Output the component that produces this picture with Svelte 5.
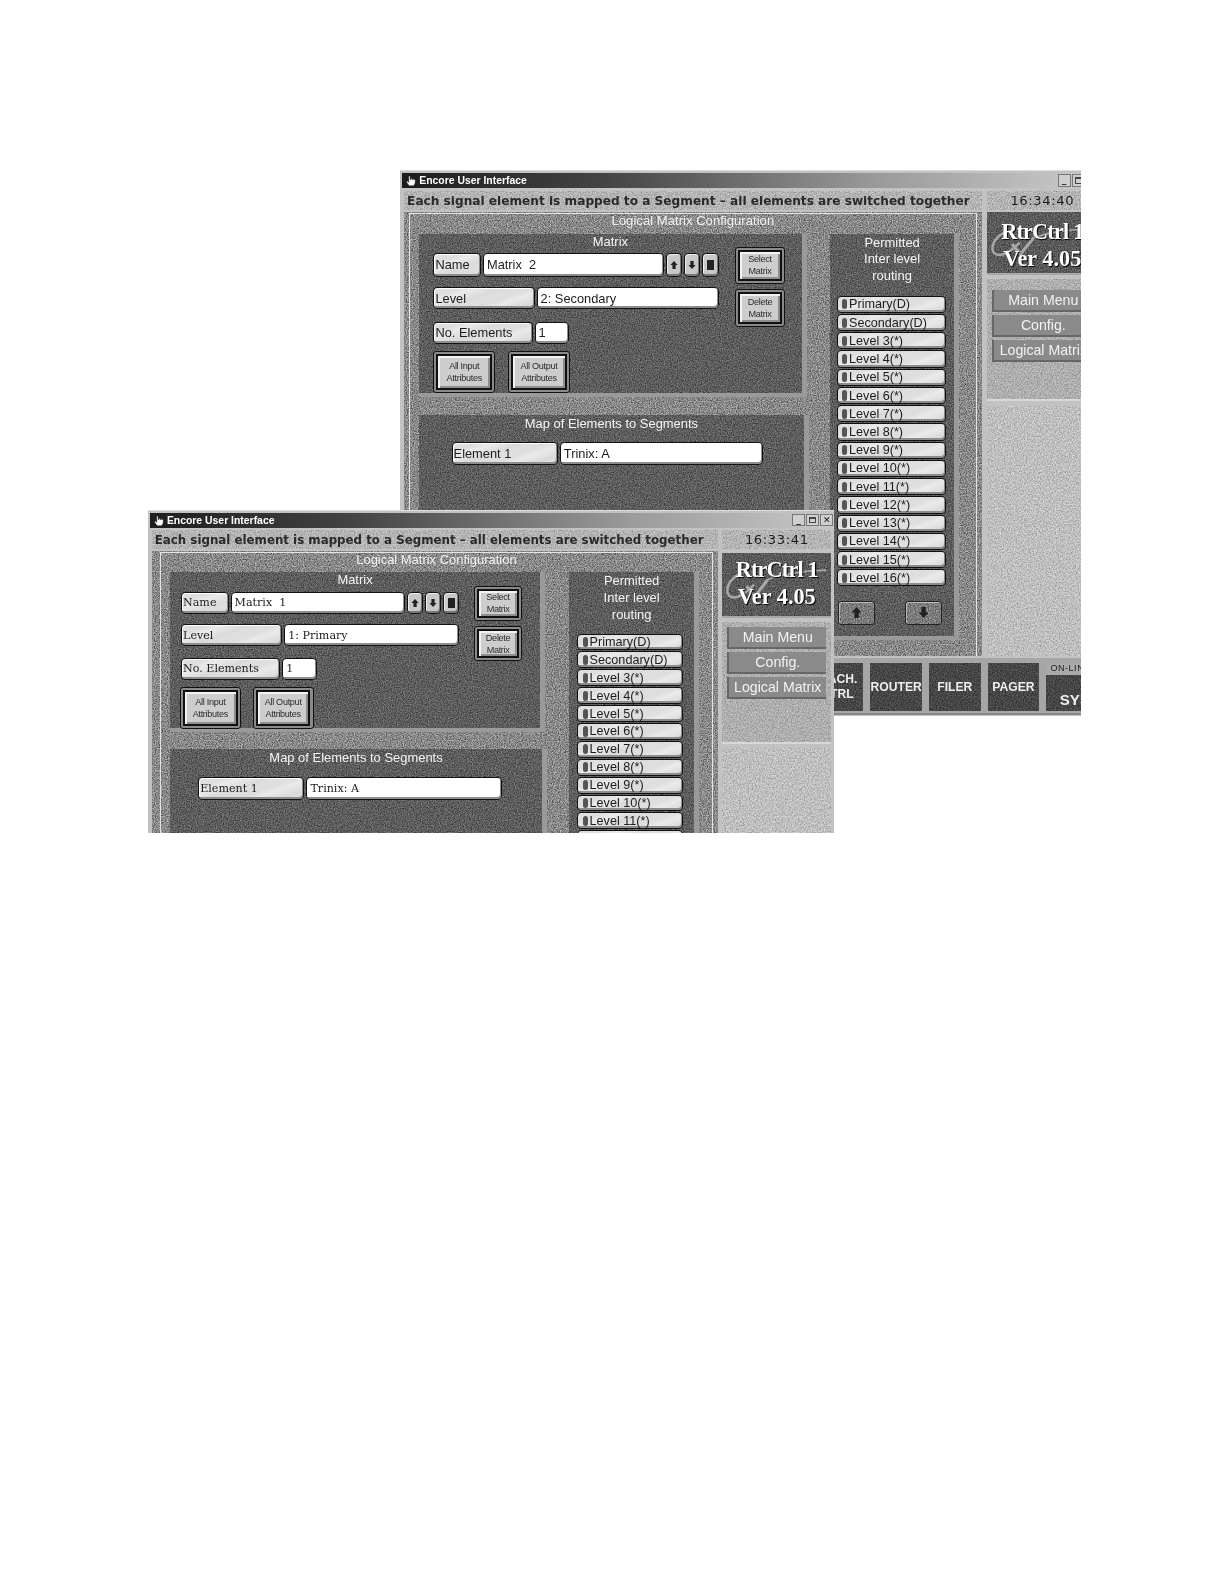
<script>
  const levels = ['Primary(D)', 'Secondary(D)']
  for (let i = 3; i <= 16; i++) levels.push(`Level ${i}(*)`)

  const windows = [
    { cls: 'back', time: '16:34:40', matrix: 'Matrix  2', level: '2: Secondary', footer: true },
    { cls: 'front', time: '16:33:41', matrix: 'Matrix  1', level: '1: Primary', footer: false }
  ]
</script>

{#snippet hand()}
  <svg class="hand" viewBox="0 0 12 12">
    <path d="M4 1h1.500v4h.7V3.500h1.300V5h.7V4h1.200v1.200h.6v-.5h1v3.800L9.500 11.500H4.500L1.500 7.500l1-1L4 8z" fill="#fff" stroke="#000" stroke-width=".4" />
  </svg>
{/snippet}

{#snippet arrow(up)}
  <svg class="arrow" viewBox="0 0 10 12">
    <path d={up ? 'M5 1 9.500 6H7v5H3V6H.5z' : 'M5 11 9.500 6H7V1H3v5H.5z'} fill="#222" />
  </svg>
{/snippet}

{#snippet dbl(a, b, kind)}
  <div class="dbl {kind}">
    <div class="face"><span>{a}</span><span>{b}</span></div>
  </div>
{/snippet}

{#snippet encore(w)}
  <div class="win {w.cls}">
    <div class="title">
      {@render hand()}
      <span>Encore User Interface</span>
      <div class="ctrls">
        <i class="c">_</i><i class="c"><b class="max"></b></i><i class="c">✕</i>
      </div>
    </div>
    <div class="head">
      <div class="msg">Each signal element is mapped to a Segment – all elements are switched together</div>
      <div class="clock">{w.time}</div>
    </div>
    <div class="cols">
      <div class="main">
        <div class="frame">
          <div class="frame-title">Logical Matrix Configuration</div>
          <div class="frame-row">
            <div class="left">
              <section class="panel matrix">
                <h3>Matrix</h3>
                <div class="matrix-row">
                  <div class="form">
                    <div class="row r-name">
                      <div class="lab l-name">Name</div>
                      <div class="inp grow">{w.matrix}</div>
                      <div class="tiny">{@render arrow(true)}</div>
                      <div class="tiny">{@render arrow(false)}</div>
                      <div class="tiny"><b class="stop"></b></div>
                    </div>
                    <div class="row r-level">
                      <div class="lab l-level">Level</div>
                      <div class="inp grow">{w.level}</div>
                    </div>
                    <div class="row r-no">
                      <div class="lab l-no">No. Elements</div>
                      <div class="inp i-no">1</div>
                    </div>
                    <div class="row r-attr">
                      {@render dbl('All Input', 'Attributes', 'attr')}
                      {@render dbl('All Output', 'Attributes', 'attr')}
                    </div>
                  </div>
                  <div class="acts">
                    {@render dbl('Select', 'Matrix', 'act')}
                    {@render dbl('Delete', 'Matrix', 'act')}
                  </div>
                </div>
              </section>
              <section class="panel map">
                <h3>Map of Elements to Segments</h3>
                <div class="row r-el">
                  <div class="lab l-el">Element 1</div>
                  <div class="inp grow">Trinix: A</div>
                </div>
              </section>
            </div>
            <section class="panel permit">
              <h3>Permitted<br />Inter level<br />routing</h3>
              <div class="levels">
                {#each levels as l}
                  <div class="lvl"><b class="pip"></b>{l}</div>
                {/each}
              </div>
              <div class="pager">
                <div class="pg">{@render arrow(true)}</div>
                <div class="pg">{@render arrow(false)}</div>
              </div>
            </section>
          </div>
        </div>
      </div>
      <div class="side">
        <div class="logo">
          <svg class="swoosh" viewBox="0 0 320 175" preserveAspectRatio="none">
            <path d="M62 55C28 64 6 98 20 118c18 18 52-8 74-30" fill="none" stroke="#a8a8a8" stroke-width="7" />
            <path d="M72 92l24 30 38-48" fill="none" stroke="#a8a8a8" stroke-width="9" />
            <path d="M134 74c50-18 110-24 172-26" fill="none" stroke="#a8a8a8" stroke-width="5" />
          </svg>
          <div class="logo-text rtr">RtrCtrl 1</div>
          <div class="logo-text">Ver 4.05</div>
        </div>
        <div class="menu">
          <div class="mbtn">Main Menu</div>
          <div class="mbtn">Config.</div>
          <div class="mbtn">Logical Matrix</div>
        </div>
        <div class="blank"></div>
      </div>
    </div>
    {#if w.footer}
      <div class="foot">
        <div class="fbtn">MACH.<br />CTRL</div>
        <div class="fbtn">ROUTER</div>
        <div class="fbtn">FILER</div>
        <div class="fbtn">PAGER</div>
        <div class="fbtn sys"><small>ON-LINE</small><span>SYSTEM</span></div>
      </div>
    {/if}
  </div>
{/snippet}

<div class="page">
  {#each windows as w}
    {@render encore(w)}
  {/each}
</div>

<style>
  :global(body) {
    background: #fff;
  }
  .page {
    --noise: url("data:image/svg+xml,%3Csvg xmlns='http://www.w3.org/2000/svg' width='240' height='240'%3E%3Cfilter id='n'%3E%3CfeTurbulence type='fractalNoise' baseFrequency='.85' numOctaves='2' seed='4'/%3E%3CfeColorMatrix values='0 0 0 0 0 0 0 0 0 0 0 0 0 0 0 1.1 0 0 0 -.3'/%3E%3C/filter%3E%3Crect width='240' height='240' filter='url(%23n)'/%3E%3C/svg%3E");
    --soft: url("data:image/svg+xml,%3Csvg xmlns='http://www.w3.org/2000/svg' width='240' height='240'%3E%3Cfilter id='n'%3E%3CfeTurbulence type='fractalNoise' baseFrequency='.7' numOctaves='2' seed='9'/%3E%3CfeColorMatrix values='0 0 0 0 0 0 0 0 0 0 0 0 0 0 0 .6 0 0 0 -.2'/%3E%3C/filter%3E%3Crect width='240' height='240' filter='url(%23n)'/%3E%3C/svg%3E");
    --wave: repeating-linear-gradient(160deg, #dedede 0 9px, #eaeaea 14px, #d8d8d8 24px);
    position: relative;
    width: 1224px;
    height: 1584px;
    overflow: hidden;
    font-family: "Liberation Sans", Arial, sans-serif;
    color: #1c1c1c;
  }

  /* the two screenshots sit freely on the page */
  .win {
    position: absolute;
    box-sizing: border-box;
    overflow: hidden;
    background: #c2c2c2;
    border-top: 1px solid #ddd;
    padding: 2px 0 0 2px;
    filter: blur(.3px);
    zoom: 1.0115;
  }
  .back {
    --main-w: 571px;
    --side-w: 110px;
    --col-gap: 5px;
    --main-h: 439px;
    --frame-l: 5px;
    --left-w: 383px;
    --left-gap: 23px;
    --matrix-h: 162px;
    --map-h: 230px;
    --permit-w: 128px;
    --permit-h: 402px;
    --pad-x: 14px;
    --name-w: 282px;
    --act-gap: 16px;
    --attr-gap: 13px;
    --lvl-w: 108px;
    --lvl-pad: 7px;
    --lvl-h: 17px;
    --lvl-gap: 1.05px;
    --list-top: 11px;
    --head-top: 3px;
    --menu-top: 11px;
    --logo-h: 62px;
    --logo-pad: 7px;
    --side-top: 0;
    left: 395.500px;
    top: 168px;
    width: 673px;
    height: 540px;
  }
  .front {
    --main-w: 560px;
    --side-w: 108px;
    --col-gap: 4px;
    --main-h: 300px;
    --frame-l: 8px;
    --left-w: 371px;
    --left-gap: 24px;
    --matrix-h: 158px;
    --map-h: 230px;
    --permit-w: 128px;
    --permit-h: 402px;
    --pad-x: 11px;
    --name-w: 275px;
    --act-gap: 15px;
    --attr-gap: 12px;
    --lvl-w: 104px;
    --lvl-pad: 8px;
    --lvl-h: 16.700px;
    --lvl-gap: 1px;
    --list-top: 10px;
    --head-top: 2px;
    --menu-top: 5px;
    --logo-h: 64px;
    --logo-pad: 4px;
    --side-top: 2px;
    left: 146px;
    top: 504px;
    width: 679px;
    height: 320px;
  }

  .title {
    display: flex;
    align-items: center;
    gap: 3px;
    height: 15px;
    padding-left: 3px;
    background: linear-gradient(90deg, #1d1d1d, #444 30%, #9a9a9a 70%, #c8c8c8);
    color: #fff;
    font: bold 10.300px "Liberation Sans", sans-serif;
  }
  .hand {
    width: 11px;
    height: 11px;
  }
  .ctrls {
    display: flex;
    gap: 1px;
    margin-left: auto;
    margin-right: 1px;
  }
  .back .ctrls {
    margin-right: -18px;
  }
  .c {
    display: flex;
    align-items: center;
    justify-content: center;
    width: 13px;
    height: 12px;
    background: #cfcfcf;
    border: 1px solid #777;
    box-sizing: border-box;
    color: #111;
    font: bold 9px/1 "DejaVu Sans", sans-serif;
  }
  .max {
    width: 7px;
    height: 6px;
    border: 1px solid #444;
    border-top-width: 2px;
    box-sizing: border-box;
  }

  .head {
    display: flex;
    gap: var(--col-gap);
    height: 19px;
    margin-top: var(--head-top);
    padding-left: 2px;
  }
  .msg,
  .clock {
    display: flex;
    align-items: center;
    background: var(--soft), #c8c8c8;
    font-family: "DejaVu Sans", sans-serif;
    font-weight: bold;
    white-space: nowrap;
    overflow: hidden;
  }
  .msg {
    box-sizing: border-box;
    flex: none;
    width: var(--main-w);
    padding-left: 3px;
    font-size: 12px;
    color: #2a2a2a;
  }
  .front .msg {
    font-size: 11.700px;
  }
  .clock {
    flex: none;
    justify-content: center;
    width: var(--side-w);
    font-size: 13px;
    font-weight: normal;
    letter-spacing: .6px;
    box-sizing: border-box;
  }

  .cols {
    display: flex;
    gap: var(--col-gap);
    margin-top: 2px;
    padding-left: 2px;
  }
  .main {
    flex: none;
    box-sizing: border-box;
    width: var(--main-w);
    height: var(--main-h);
    padding: 1px 5px 0 var(--frame-l);
    background: var(--noise), #b6b6b6;
  }
  .frame {
    box-sizing: border-box;
    height: 100%;
    padding: 0 0 0 9px;
    border: 1px solid #e4e4e4;
    border-bottom: 0;
  }
  .frame-title {
    height: 19px;
    margin-left: -9px;
    color: #f1f1f1;
    font-size: 13px;
    line-height: 13px;
    text-align: center;
  }
  .front .frame-title {
    font-size: 12.800px;
    line-height: 14px;
  }
  .frame-row {
    display: flex;
    gap: var(--left-gap);
  }
  .left {
    display: flex;
    flex-direction: column;
    gap: 17px;
    width: var(--left-w);
  }
  .panel {
    box-sizing: border-box;
    background: var(--noise), #7c7c7c;
    border-right: 5px solid #9a9a9a;
    border-bottom: 4px solid #9a9a9a;
  }
  .panel h3 {
    margin: 0;
    color: #f4f4f4;
    font-size: 12.800px;
    font-weight: normal;
    text-align: center;
  }
  .matrix {
    height: var(--matrix-h);
    padding: 1px 0 0 var(--pad-x);
  }
  .matrix h3 {
    height: 18px;
    line-height: 14px;
    margin-left: calc(-1 * var(--pad-x));
  }
  .matrix-row {
    display: flex;
    gap: var(--act-gap);
  }
  .form {
    width: var(--name-w);
  }
  .row {
    display: flex;
    gap: 2px;
  }
  .r-name {
    height: 24px;
  }
  .r-level {
    height: 22px;
    margin-top: 10px;
  }
  .r-no {
    height: 22px;
    margin-top: 12px;
  }
  .r-attr {
    gap: var(--attr-gap);
    height: 42px;
    margin-top: 7px;
  }
  .front .r-name {
    height: 22px;
  }
  .front .r-level {
    margin-top: 10px;
  }
  .front .r-no {
    height: 21px;
  }
  .front .r-attr {
    height: 42px;
    margin-top: 7px;
    margin-left: -1px;
  }

  .lab,
  .inp,
  .tiny {
    display: flex;
    align-items: center;
    box-sizing: border-box;
    border: 1px solid #111;
    border-radius: 4px;
    box-shadow: inset -1px -2px 0 #8d8d8d, inset 1px 1px 0 #fff;
    font-size: 12.700px;
    white-space: pre;
  }
  .front .lab,
  .front .inp {
    font-family: "DejaVu Serif", serif;
    font-size: 11px;
  }
  .lab {
    flex: none;
    padding-left: 1px;
    background: var(--wave);
  }
  .inp {
    padding-left: 3px;
    background: #fff;
  }
  .grow {
    flex: 1;
  }
  .l-name {
    width: 47px;
  }
  .l-level {
    width: 100px;
  }
  .l-no {
    width: 98px;
  }
  .i-no {
    width: 34px;
  }
  .l-el {
    width: 105px;
  }
  .tiny {
    flex: none;
    justify-content: center;
    width: 16px;
    background: #c8c8c8;
    box-shadow: inset -1px -2px 0 #777, inset 1px 1px 0 #eee;
  }
  .arrow {
    width: 8px;
    height: 10px;
  }
  .stop {
    width: 7px;
    height: 10px;
    background: #222;
  }

  .dbl {
    display: flex;
    box-sizing: border-box;
    padding: 2px;
    background: #8a8a8a;
    border: 1px solid #111;
    border-radius: 3px;
  }
  .face {
    flex: 1;
    display: flex;
    flex-direction: column;
    align-items: center;
    justify-content: center;
    box-sizing: border-box;
    border: 2px solid #111;
    background: #cdcdcd;
    box-shadow: inset 2px 2px 0 #f2f2f2, inset -2px -2px 0 #8e8e8e;
    color: #2b2b2b;
    font-size: 9px;
    line-height: 12px;
    letter-spacing: -.3px;
  }
  .attr {
    width: 61px;
    height: 42px;
  }
  .acts {
    display: flex;
    flex-direction: column;
    gap: 5px;
    margin-top: -6px;
  }
  .act {
    width: 50px;
    height: 37px;
  }
  .front .act {
    width: 47px;
    height: 35px;
  }
  .front .attr {
    width: 60px;
  }

  .map {
    width: calc(var(--left-w) + 2px);
    height: var(--map-h);
    padding-top: 2px;
  }
  .map h3 {
    height: 25px;
    font-size: 12.800px;
    line-height: 14px;
  }
  .r-el {
    height: 23px;
    width: 308px;
    margin-left: 32px;
  }
  .front .r-el {
    width: 300px;
    margin-left: 28px;
  }

  .permit {
    flex: none;
    width: var(--permit-w);
    height: var(--permit-h);
    padding: 1px 0 0 var(--lvl-pad);
  }
  .permit h3 {
    margin-left: calc(-1 * var(--lvl-pad));
    line-height: 16.500px;
  }
  .levels {
    display: flex;
    flex-direction: column;
    gap: var(--lvl-gap);
    margin-top: var(--list-top);
  }
  .lvl {
    display: flex;
    align-items: center;
    gap: 2px;
    box-sizing: border-box;
    width: var(--lvl-w);
    height: var(--lvl-h);
    padding-left: 4px;
    border: 1px solid #111;
    border-radius: 4px;
    background: var(--wave);
    box-shadow: inset -1px -2px 0 #8d8d8d;
    font-size: 12.500px;
    white-space: nowrap;
  }
  .pip {
    width: 5px;
    height: 10px;
    border-radius: 3px;
    background: #555;
  }
  .pager {
    display: flex;
    gap: 29px;
    margin: 14px 0 0 1px;
  }
  .pg {
    display: flex;
    align-items: center;
    justify-content: center;
    width: 37px;
    height: 24px;
    box-sizing: border-box;
    border: 1px solid #222;
    border-radius: 3px;
    background: var(--noise), #a4a4a4;
    box-shadow: inset 1px 1px 0 #bbb;
  }
  .pg .arrow {
    width: 11px;
    height: 13px;
  }

  .side {
    display: flex;
    flex-direction: column;
    flex: none;
    width: var(--side-w);
    height: var(--main-h);
    gap: 4px;
    padding-top: var(--side-top);
    box-sizing: border-box;
  }
  .logo {
    position: relative;
    flex: none;
    box-sizing: border-box;
    height: var(--logo-h);
    padding-top: var(--logo-pad);
    background: var(--noise), #787878;
    border-bottom: 2px solid #a8a8a8;
    color: #fff;
    text-align: center;
  }
  .swoosh {
    position: absolute;
    inset: 0;
    width: 100%;
    height: 100%;
  }
  .logo-text {
    position: relative;
    font: bold 22px/26px "Liberation Serif", serif;
    text-shadow: 1px 1px 1px #000;
  }
  .rtr {
    letter-spacing: -.8px;
  }
  .menu {
    display: flex;
    flex: none;
    flex-direction: column;
    gap: 2.500px;
    box-sizing: border-box;
    height: 121px;
    padding: var(--menu-top) 5px 0;
    background: var(--soft), #c2c2c2;
    border-bottom: 2px solid #d8d8d8;
  }
  .mbtn {
    display: flex;
    align-items: center;
    justify-content: center;
    height: 20px;
    background: #8a8a8a;
    border-bottom: 2px solid #666;
    border-left: 2px solid #666;
    color: #f2f2f2;
    font-size: 14px;
    white-space: nowrap;
  }
  .blank {
    flex: 1;
    background: var(--soft), #d4d4d4;
  }

  .foot {
    display: flex;
    gap: 7px;
    box-sizing: border-box;
    height: 56px;
    width: 692px;
    margin-top: 2px;
    padding: 5px 0 0 405px;
    background: #a6a6a6;
    border-bottom: 2px solid #888;
  }
  .fbtn {
    display: flex;
    align-items: center;
    justify-content: center;
    flex: none;
    box-sizing: border-box;
    width: 51px;
    height: 47px;
    background: var(--noise), #5e5e5e;
    color: #eee;
    font: bold 12px/15px "Liberation Sans", sans-serif;
    text-align: center;
  }
  .sys {
    flex-direction: column;
    justify-content: flex-start;
    width: 88px;
  }
  .sys small {
    align-self: stretch;
    padding-left: 4px;
    background: #aaa;
    color: #222;
    font-size: 9px;
    font-weight: normal;
    letter-spacing: .5px;
    line-height: 11px;
    text-align: left;
  }
  .sys span {
    margin-top: 17px;
    font-size: 15px;
  }
</style>
